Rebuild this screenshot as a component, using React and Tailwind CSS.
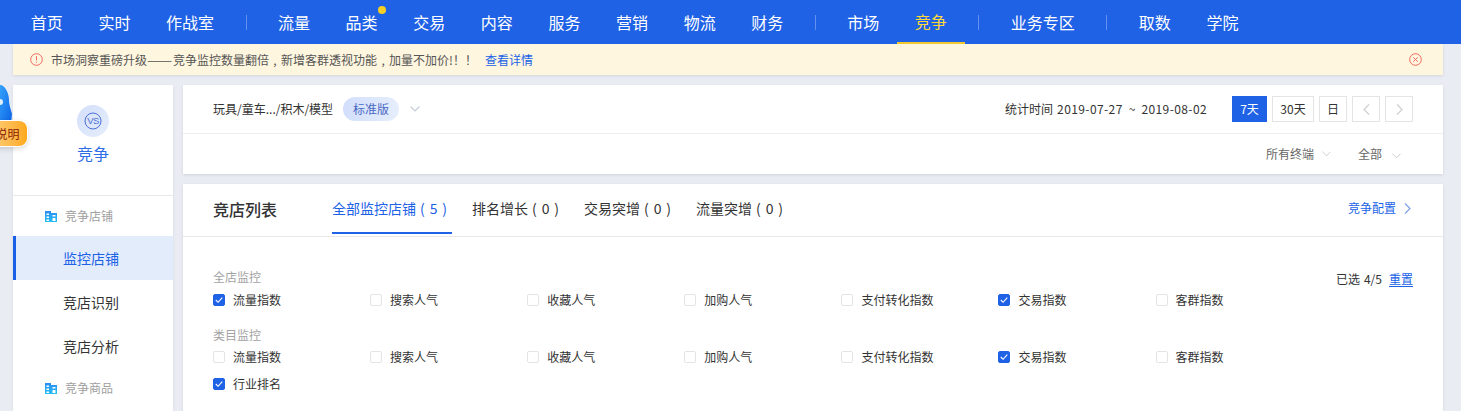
import React from "react";

const navGroups = [
  ["首页", "实时", "作战室"],
  ["流量", "品类", "交易", "内容", "服务", "营销", "物流", "财务"],
  ["市场", "竞争"],
  ["业务专区"],
  ["取数", "学院"],
];

const metrics = ["流量指数", "搜索人气", "收藏人气", "加购人气", "支付转化指数", "交易指数", "客群指数"];
const shopChecked = ["流量指数", "交易指数"];
const categoryChecked = ["交易指数"];

// thin chevrons, lucide's are too small at these box sizes
const ChevDown = ({ className, w = 9 }) => (
  <svg className={className} width={w} height="6" viewBox="0 0 10 6" fill="none" stroke="currentColor" strokeWidth="1.1">
    <path d="M0.500 0.500L5 5L9.500 0.500" />
  </svg>
);

const ChevSide = ({ className, left }) => (
  <svg className={className} width="7" height="11" viewBox="0 0 7 11" fill="none" stroke="currentColor" strokeWidth="1.2">
    <path d={left ? "M6 0.500L1 5.500L6 10.500" : "M1 0.500L6 5.500L1 10.500"} />
  </svg>
);

const TopNav = () => (
  <div className="relative z-10 flex h-[44px] items-center bg-[#2062e6] pl-[13px] text-[16px] text-white">
    {navGroups.map((group, i) => (
      <React.Fragment key={i}>
        {i > 0 && <div className="mx-[13.700px] h-[15px] w-px bg-white/30" />}
        {group.map((name) => (
          <div
            key={name}
            className={`relative flex h-[44px] items-center justify-center px-[17.800px] ${
              name === "竞争" ? "border-b-2 border-[#f5c92e] text-[#ffd93b]" : ""
            }`}
          >
            {name}
            {name === "品类" && (
              <span className="absolute left-[50px] top-[6px] h-2 w-2 rounded-full bg-[#f5cf23]" />
            )}
          </div>
        ))}
      </React.Fragment>
    ))}
  </div>
);

const Comma = () => <span className="inline-block w-[12px] text-center">,</span>;

const Notice = () => (
  <div className="ml-[13px] mr-[18px] flex h-[31px] items-center bg-[#fff6df] pl-[17px] pr-[21px] text-[12px] text-[#555] shadow-[0_1px_3px_rgba(0,0,0,0.1)]">
    <svg width="13" height="13" viewBox="0 0 13 13" fill="none" stroke="#f2685f" strokeWidth="1">
      <circle cx="6.5" cy="6.5" r="5.8" />
      <path d="M6.5 3.2v4.2M6.5 8.8v1" />
    </svg>
    <span className="ml-[8px]">
      市场洞察重磅升级<span className="inline-block w-[26px] origin-left scale-x-[1.25]">——</span>竞争监控数量翻倍<Comma />新增客群透视功能<Comma />加量不加价!！！
    </span>
    <span className="ml-[8px] text-[#2062e6]">查看详情</span>
    <svg className="ml-auto" width="13" height="13" viewBox="0 0 13 13" fill="none" stroke="#f2685f" strokeWidth="1">
      <circle cx="6.5" cy="6.5" r="5.8" />
      <path d="M4.3 4.3l4.4 4.4M8.7 4.3l-4.4 4.4" />
    </svg>
  </div>
);

const Mascot = () => (
  <div className="absolute left-0 top-[84px] z-20 h-[64px] w-[30px]">
    <svg className="absolute left-0 top-0" width="13" height="42" viewBox="0 0 13 42">
      <defs>
        <linearGradient id="mascot" x1="0" y1="0" x2="1" y2="1">
          <stop offset="0" stopColor="#36a2fa" />
          <stop offset="1" stopColor="#0a62e6" />
        </linearGradient>
      </defs>
      <path d="M0 1c5 0 9 8 9 15 0 5 2 10 3 14l-1 10H0z" fill="url(#mascot)" />
      <circle cx="0" cy="18" r="3" fill="#dff0ff" />
    </svg>
    <div className="absolute left-[-12px] top-[37px] flex h-[25px] w-[39px] items-center justify-center rounded-[8px] bg-gradient-to-r from-[#ffd27a] to-[#ffa914] text-[12px] text-[#8a1c05] shadow-[0_0_0_1px_#fff,0_2px_6px_rgba(0,0,0,0.2)]">
      说明
    </div>
  </div>
);

const BuildingIcon = () => (
  <svg width="12" height="12" viewBox="0 0 12 12">
    <defs>
      <linearGradient id="bld" x1="0" y1="0" x2="0" y2="1">
        <stop offset="0" stopColor="#2b8cf0" />
        <stop offset="1" stopColor="#25c0f5" />
      </linearGradient>
    </defs>
    <path
      fillRule="evenodd"
      d="M0 1h6v2h6v9H0zM1.500 3.500v1.500H4V3.500zM1.500 6.500V8H4V6.500zM1.500 9.500V11H4V9.500zM7.500 5v1.500H10.500V5zM7.500 8v3H10.500V8z"
      fill="url(#bld)"
    />
  </svg>
);

const SideSection = ({ label }) => (
  <div className="flex h-[40px] items-center pl-[32px] text-[12px] text-[#a0a0a0]">
    <BuildingIcon />
    <span className="ml-[8px]">{label}</span>
  </div>
);

const SideItem = ({ label, active }) => (
  <div
    className={`flex h-[44px] items-center border-l-[3px] pl-[47px] text-[14px] ${
      active ? "border-[#1a5fe8] bg-[#e3ecfb] text-[#2062e6]" : "border-transparent text-[#333]"
    }`}
  >
    {label}
  </div>
);

const Sidebar = () => (
  <aside className="w-[160px] shrink-0 bg-white shadow-[0_1px_3px_rgba(0,0,0,0.08)]">
    <div className="flex h-[111px] flex-col items-center border-b border-[#e8e8e8] pt-[20px]">
      <div className="flex h-[32px] w-[32px] items-center justify-center rounded-full bg-gradient-to-br from-[#d3dffa] to-[#e6eefc]">
        <svg width="18" height="18" viewBox="0 0 18 18" fill="none">
          <circle cx="9" cy="9" r="8" stroke="#4b6fd6" strokeWidth="1" />
          <text x="9" y="12.200" textAnchor="middle" fontSize="9.500" letterSpacing="-0.5" fill="#4b6fd6" fontFamily="'Liberation Sans', sans-serif">
            VS
          </text>
        </svg>
      </div>
      <div className="mt-[5px] text-[16px] leading-[22px] text-[#2f6de8]">竞争</div>
    </div>
    <SideSection label="竞争店铺" />
    <SideItem label="监控店铺" active />
    <SideItem label="竞店识别" />
    <SideItem label="竞店分析" />
    <SideSection label="竞争商品" />
  </aside>
);

const DayBtn = ({ children, active, className }) => (
  <div
    className={`flex h-[26px] items-center justify-center text-[12px] ${
      active ? "bg-[#2062e6] text-white" : "border border-[#e4e4e4] text-[#333]"
    } ${className}`}
  >
    {children}
  </div>
);

const HeaderCard = () => (
  <div className="bg-white text-[12px] text-[#333] shadow-[0_1px_3px_rgba(0,0,0,0.1)]">
    <div className="flex h-[49px] items-center border-b border-[#eeeeee] px-[30px]">
      <span>玩具/童车.../积木/模型</span>
      <span className="ml-[10px] flex h-[24px] w-[56px] items-center justify-center rounded-full bg-gradient-to-r from-[#d2dffb] to-[#e6eefc] text-[#4a68c4]">
        标准版
      </span>
      <ChevDown className="ml-[11px] text-[#c4ccd8]" w={10} />
      <span className="ml-auto">
        统计时间<span className="ml-[4px] tracking-[0.4px]">2019-07-27</span>
        <span className="mx-[6px]">~</span>
        <span className="tracking-[0.4px]">2019-08-02</span>
      </span>
      <div className="ml-[25px] flex gap-[5px]">
        <DayBtn active className="w-[35px]">7天</DayBtn>
        <DayBtn className="w-[42px]">30天</DayBtn>
        <DayBtn className="w-[28px]">日</DayBtn>
        <DayBtn className="w-[28px]"><ChevSide left className="text-[#cfcfcf]" /></DayBtn>
        <DayBtn className="w-[28px]"><ChevSide className="text-[#cfcfcf]" /></DayBtn>
      </div>
    </div>
    <div className="flex h-[40px] items-center justify-end pr-[42px] text-[#666]">
      <span>所有终端</span>
      <ChevDown className="ml-[8px] text-[#cccccc]" />
      <span className="ml-[27px]">全部</span>
      <ChevDown className="ml-[10px] mt-[3px] text-[#cccccc]" />
    </div>
  </div>
);

const Tab = ({ label, count, active }) => (
  <div
    className={`flex h-[50px] items-center border-b-2 text-[14px] ${
      active ? "border-[#2062e6] text-[#2062e6]" : "border-transparent text-[#333]"
    }`}
  >
    {label}
    <span className="flex w-[36px] justify-between pl-[4px] pr-[5px]">
      <span>(</span>
      <span>{count}</span>
      <span>)</span>
    </span>
  </div>
);

const Check = ({ label, checked }) => (
  <div className="flex h-[18px] items-center text-[12px] text-[#333]">
    <span
      className={`flex h-[12px] w-[12px] shrink-0 items-center justify-center rounded-[2px] border ${
        checked ? "border-[#2062e6] bg-[#2062e6]" : "border-[#e4e4e4] bg-white"
      }`}
    >
      {checked && (
        <svg width="10" height="10" viewBox="0 0 10 10" fill="none" stroke="#fff" strokeWidth="1.100">
          <path d="M1.800 5l2.300 2.300 4.200-4.600" />
        </svg>
      )}
    </span>
    <span className="ml-[8px]">{label}</span>
  </div>
);

const ListCard = () => (
  <div className="mt-[10px] flex-1 bg-white shadow-[0_1px_3px_rgba(0,0,0,0.1)]">
    <div className="flex h-[53px] items-end border-b border-[#e8e8e8] pl-[30px] pr-[32px]">
      <div className="mb-[2px] flex h-[50px] items-center text-[16px] font-medium text-[#333]">竞店列表</div>
      <div className="mb-[2px] ml-[55px] flex gap-[20px]">
        <Tab label="全部监控店铺" count="5" active />
        <Tab label="排名增长" count="0" />
        <Tab label="交易突增" count="0" />
        <Tab label="流量突增" count="0" />
      </div>
      <div className="mb-[3px] ml-auto flex h-[50px] items-center text-[12px] text-[#2062e6]">
        竞争配置
        <ChevSide className="ml-[8px] text-[#7f9fe8]" />
      </div>
    </div>
    <div className="px-[30px] pt-[31px] text-[12px]">
      <div className="flex items-start justify-between">
        <span className="leading-[18px] text-[#a3a3a3]">全店监控</span>
        <span className="pt-[2px] leading-[18px] text-[#333]">
          已选<span className="ml-[4px]">4/5</span>
          <span className="ml-[7px] text-[#2062e6] underline underline-offset-2">重置</span>
        </span>
      </div>
      <div className="mt-[3px] grid grid-cols-[repeat(7,157.100px)]">
        {metrics.map((m) => (
          <Check key={m} label={m} checked={shopChecked.includes(m)} />
        ))}
      </div>
      <div className="mt-[17px] leading-[18px] text-[#a3a3a3]">类目监控</div>
      <div className="mt-[4px] grid grid-cols-[repeat(7,157.100px)] gap-y-[9px]">
        {metrics.map((m) => (
          <Check key={m} label={m} checked={categoryChecked.includes(m)} />
        ))}
        <Check label="行业排名" checked />
      </div>
    </div>
  </div>
);

export default function App() {
  return (
    <div className="relative h-[411px] w-[1461px] overflow-hidden bg-[#e9edf3] font-['Noto_Sans_CJK_SC','Liberation_Sans',sans-serif]">
      <TopNav />
      <Notice />
      <Mascot />
      <div className="ml-[13px] mr-[18px] mt-[10px] flex h-[326px] gap-[10px]">
        <Sidebar />
        <div className="flex min-w-0 flex-1 flex-col">
          <HeaderCard />
          <ListCard />
        </div>
      </div>
    </div>
  );
}
